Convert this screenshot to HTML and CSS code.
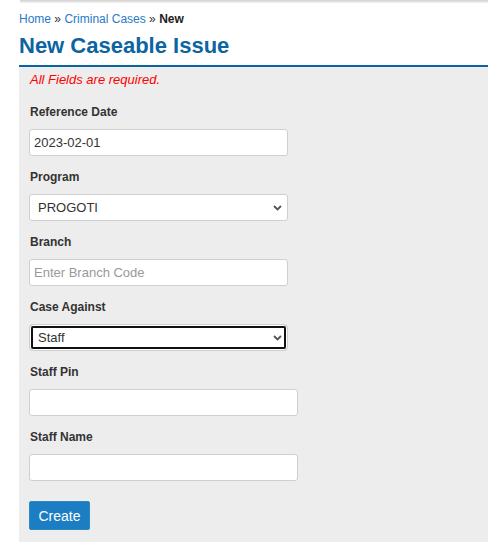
FILE: index.html
```html
<!DOCTYPE html>
<html>
<head>
<meta charset="utf-8">
<link rel="stylesheet" href="styles.css">
</head>
<body>
<div class="topbar"></div>
<div class="page">
  <div class="crumbs"><a href="#">Home</a> <span class="sep">»</span> <a href="#">Criminal Cases</a> <span class="sep">»</span> <b>New</b></div>
  <h1 class="title">New Caseable Issue</h1>
  <form class="panel">
    <p class="err">All Fields are required.</p>
    <div class="group">
      <label class="lbl">Reference Date</label>
      <input class="field" type="text" value="2023-02-01">
    </div>
    <div class="group">
      <label class="lbl">Program</label>
      <div class="selwrap">
        <select class="field sel"><option>PROGOTI</option></select>
        <svg class="chev" width="9" height="6" viewBox="0 0 9 6"><path d="M1 1 L4.5 4.5 L8 1" fill="none" stroke="#555" stroke-width="1.8"/></svg>
      </div>
    </div>
    <div class="group">
      <label class="lbl">Branch</label>
      <input class="field" type="text" placeholder="Enter Branch Code">
    </div>
    <div class="group">
      <label class="lbl">Case Against</label>
      <div class="selwrap">
        <select class="field sel focused"><option>Staff</option></select>
        <svg class="chev" width="9" height="6" viewBox="0 0 9 6"><path d="M1 1 L4.5 4.5 L8 1" fill="none" stroke="#555" stroke-width="1.8"/></svg>
      </div>
    </div>
    <div class="group">
      <label class="lbl">Staff Pin</label>
      <input class="field wide" type="text">
    </div>
    <div class="group">
      <label class="lbl">Staff Name</label>
      <input class="field wide" type="text">
    </div>
    <button type="button" class="btn">Create</button>
  </form>
</div>
</body>
</html>
```
FILE: styles.css
```css
html, body {
  margin: 0;
  padding: 0;
  height: 100%;
  background: #fff;
  font-family: "Liberation Sans", Arial, sans-serif;
  color: #333;
}
.topbar {
  margin-left: 20px;
  height: 3px;
  background: linear-gradient(#d0d0d0, #f4f4f4);
}
.page {
  padding: 8px 0 0 19px;
  display: flex;
  flex-direction: column;
  height: calc(100% - 11px);
}
.crumbs {
  font-size: 12px;
  line-height: 16px;
  color: #333;
}
.crumbs a {
  color: #2a7ac8;
  text-decoration: none;
}
.crumbs .sep {
  color: #333;
}
.crumbs b {
  color: #222;
}
.title {
  margin: 6px 0 0;
  font-size: 22px;
  line-height: 26px;
  font-weight: bold;
  color: #0c64a2;
  padding-bottom: 6px;
  border-bottom: 2px solid #0c64a2;
}
.panel {
  flex: 1;
  background: #ededed;
  padding: 4px 10px 0;
  margin: 0;
}
.err {
  margin: 0 0 15px 1px;
  font-size: 13px;
  line-height: 17px;
  font-style: italic;
  color: #ff0000;
}
.group {
  margin-bottom: 12px;
}
.lbl {
  display: block;
  font-size: 12px;
  font-weight: bold;
  line-height: 18px;
  margin: 0 0 8px 1px;
  color: #333;
}
.field {
  box-sizing: border-box;
  display: block;
  width: 259px;
  height: 27px;
  margin: 0;
  padding: 0 4px;
  border: 1px solid #cfcfcf;
  border-radius: 3px;
  background: #fff;
  font-family: "Liberation Sans", Arial, sans-serif;
  font-size: 13px;
  color: #333;
}
.field::placeholder {
  color: #999;
}
.wide {
  width: 269px;
}
.selwrap {
  position: relative;
  width: 259px;
}
.sel {
  -webkit-appearance: none;
  appearance: none;
  padding-left: 8px;
  color: #333;
}
.chev {
  position: absolute;
  right: 6px;
  top: 11px;
  pointer-events: none;
}
.focused {
  box-shadow: inset 0 0 0 1px #fff, inset 0 0 0 3px #111;
  border-radius: 4px;
}
.btn {
  margin-top: 8px;
  height: 29px;
  width: 61px;
  padding: 0;
  border: 1px solid #2f86c4;
  border-radius: 2px;
  background: #1b7ec2;
  color: #fff;
  font-family: "Liberation Sans", Arial, sans-serif;
  font-size: 14px;
}
```
